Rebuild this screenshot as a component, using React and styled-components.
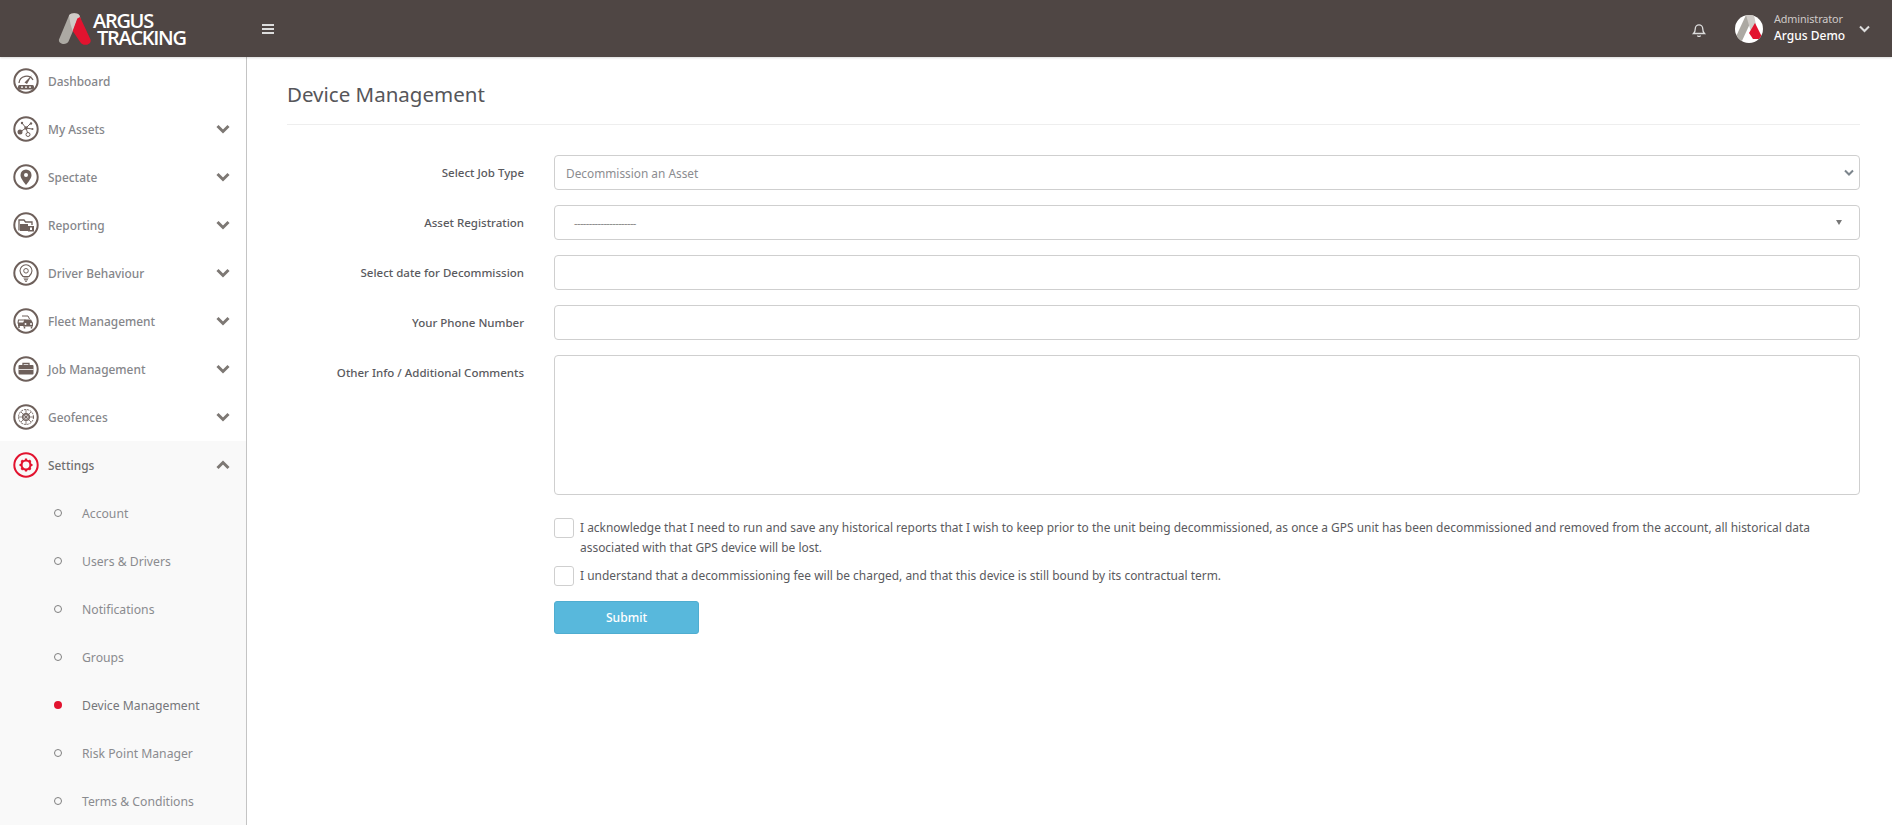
import React from "react";
import styled, { createGlobalStyle } from "styled-components";

const FONT = `"Noto Sans", "Open Sans", sans-serif`;

const Global = createGlobalStyle`
  html, body { margin: 0; padding: 0; height: 100%; background: #fff; overflow: hidden; }
  body { font-family: ${FONT}; }
  * { box-sizing: border-box; }
`;

const Page = styled.div`
  width: 1892px;
  height: 825px;
  display: flex;
  flex-direction: column;
  overflow: hidden;
`;

const Header = styled.header`
  height: 57px;
  flex: none;
  background: #4f4644;
  display: flex;
  align-items: center;
  box-shadow: 0 1px 2px rgba(0,0,0,.15);
  position: relative;
  z-index: 2;
`;
const LogoArea = styled.div`
  width: 262px;
  padding-left: 58px;
  display: flex;
  align-items: center;
  gap: 1px;
`;
const LogoMarkSvg = styled.svg`
  width: 34px;
  height: 34px;
  flex: none;
`;
const LogoText = styled.div`
  color: #fff;
  font-family: "Open Sans", sans-serif;
  font-weight: 600;
  font-size: 20px;
  line-height: 17px;
  letter-spacing: -1.3px;
  padding-left: 4px;
  text-indent: -4px;
  white-space: nowrap;
`;
const HeaderSpacer = styled.div`flex: 1;`;
const Hamburger = styled.div`
  width: 12px;
  display: flex;
  flex-direction: column;
  gap: 2px;
  span { display: block; height: 2px; background: #ddd; }
`;
const Bell = styled.svg`
  width: 16px;
  height: 16px;
  margin-right: 28px;
  fill: none;
  stroke: #ddd;
  stroke-width: 1.3;
`;
const Avatar = styled.svg`
  width: 28px;
  height: 28px;
  margin-right: 11px;
  flex: none;
`;
const UserBlock = styled.div`
  display: flex;
  flex-direction: column;
  width: 85px;
  margin-top: -2px;
`;
const Role = styled.div`
  color: #cfcac8;
  font-size: 10.8px;
  line-height: 15px;
  letter-spacing: -0.1px;
`;
const UserName = styled.div`
  color: #fff;
  font-size: 12px;
  font-weight: 500;
  line-height: 19px;
`;
const UserChevron = styled.svg`
  width: 11px;
  height: 8px;
  margin-right: 22px;
  fill: none;
  stroke: #ddd;
  stroke-width: 2;
`;

const Body = styled.div`
  flex: 1;
  min-height: 0;
  display: flex;
`;
const Sidebar = styled.nav`
  width: 247px;
  flex: none;
  border-right: 1px solid #c4c4c4;
  overflow: hidden;
`;
const MenuRow = styled.div`
  height: 48px;
  display: flex;
  align-items: center;
  padding-left: 13px;
  padding-right: 16px;
  background: ${p => (p.$open ? "#f9f9f9" : "#fff")};
  color: ${p => (p.$open ? "#6f6f6f" : "#85868a")};
  font-size: 11.9px;
  font-weight: 500;
`;
const Ring = styled.svg`
  width: 26px;
  height: 26px;
  flex: none;
  margin-right: 9px;
`;
const MenuLabel = styled.span`flex: 1;`;
const Chevron = styled.svg`
  width: 14px;
  height: 10px;
  fill: none;
  stroke: #7d7874;
  stroke-width: 3;
  transform: ${p => (p.$up ? "rotate(180deg)" : "none")};
`;
const SubList = styled.div`
  background: #f9f9f9;
`;
const SubRow = styled.div`
  height: 48px;
  display: flex;
  align-items: center;
  padding-left: 54px;
  color: ${p => (p.$active ? "#75767a" : "#8a8b8f")};
  font-size: 12.2px;
`;
const Dot = styled.span`
  width: 8px;
  height: 8px;
  border-radius: 50%;
  flex: none;
  margin-right: 20px;
  border: ${p => (p.$active ? "none" : "1px solid #808080")};
  background: ${p => (p.$active ? "#e2132f" : "transparent")};
`;

const Main = styled.main`
  flex: 1;
  min-width: 0;
  padding: 0 32px 0 40px;
`;
const Title = styled.h1`
  margin: 0;
  height: 68px;
  border-bottom: 1px solid #eeeeee;
  font-size: 20.5px;
  font-weight: 400;
  line-height: 29px;
  padding-top: 23px;
  color: #56565a;
`;
const Form = styled.form`
  margin-top: 30px;
  display: flex;
  flex-direction: column;
`;
const Row = styled.div`
  display: flex;
  margin-bottom: 15px;
`;
const Label = styled.label`
  width: 237px;
  margin-right: 30px;
  flex: none;
  text-align: right;
  font-size: 11.5px;
  font-weight: 500;
  line-height: 35px;
  color: #5a5a5e;
`;
const fieldCss = `
  flex: 1;
  min-width: 0;
  height: 35px;
  border: 1px solid #cfcfcf;
  border-radius: 4px;
  background: #fff;
  font-family: ${FONT};
  font-size: 11.85px;
  outline: none;
`;
const SelectBox = styled.div`
  ${fieldCss}
  display: flex;
  align-items: center;
  justify-content: space-between;
  padding: ${p => p.$pad || "0 5px 0 11px"};
  color: #8b8c90;
`;
const Input = styled.input`${fieldCss}`;
const Area = styled.textarea`
  ${fieldCss}
  height: 140px;
  resize: none;
`;
const SmallChevron = styled.svg`
  width: 10px;
  height: 7px;
  fill: none;
  stroke: #7c858c;
  stroke-width: 2;
`;
const Triangle = styled.span`
  width: 0;
  height: 0;
  border-left: 3.5px solid transparent;
  border-right: 3.5px solid transparent;
  border-top: 5px solid #777;
`;
const Dashes = styled.span`
  color: #888;
  letter-spacing: -0.6px;
  font-size: 11px;
`;
const CheckRow = styled.div`
  display: flex;
  margin-left: 267px;
  margin-top: ${p => p.$top || 0}px;
`;
const CheckBox = styled.input.attrs({ type: "checkbox" })`
  appearance: none;
  width: 20px;
  height: 20px;
  margin: 0 6px 0 0;
  flex: none;
  border: 1px solid #cfcfcf;
  border-radius: 3px;
  background: #fff;
`;
const CheckText = styled.div`
  font-size: 11.95px;
  line-height: 20px;
  white-space: nowrap;
  color: #5a5a5e;
`;
const Submit = styled.button`
  margin: 15px 0 0 267px;
  width: 145px;
  height: 33px;
  background: #58b8dc;
  border: 1px solid #4fadd0;
  border-radius: 3px;
  color: #fff;
  font-family: ${FONT};
  font-size: 12.1px;
  font-weight: 500;
`;

const LogoMark = () => (
  <LogoMarkSvg viewBox="0 0 34 34">
    <path d="M11 3.500C12.500 .5 20 .5 21.500 3.500L10.500 29.500C8.800 33.500 0 32.500 1 27.500Z" fill="#aca9a3" />
    <path d="M11 3.500C12.500 .5 20 .5 21.500 3.500L22.500 6.500 19.300 7 14.700 19.300 12.500 12Z" fill="#cfcbc7" />
    <path d="M19.300 6.500L22 5 32.500 27.500C34 32.500 25.500 35 22.500 30.500L14.700 19Z" fill="#e2132f" />
  </LogoMarkSvg>
);

const brown = "#6e605b";
const RingIcon = ({ color = brown, children }) => (
  <Ring viewBox="0 0 26 26">
    <circle cx="13" cy="13" r="11.7" fill="none" stroke={color} strokeWidth="2" />
    {children}
  </Ring>
);

const icons = {
  Dashboard: (
    <RingIcon>
      <path d="M6 15a7.500 7.500 0 0 1 14 -3" fill="none" stroke={brown} strokeWidth="1.300" />
      <path d="M11.500 14.500 L19 7 L14 16Z" fill={brown} />
      <rect x="5" y="17" width="16" height="4.500" rx="1.500" fill={brown} />
      <path d="M8 19.200h2M12 19.200h2M16 19.200h2" stroke="#fff" strokeWidth="1.200" />
    </RingIcon>
  ),
  Assets: (
    <RingIcon>
      <path d="M7 16 L13 12 L18 7 M13 12 L9 7 M13 12 L19 13 M13 12 L15 18" stroke={brown} strokeWidth="1" fill="none" />
      <circle cx="7" cy="16" r="2.500" fill={brown} />
      <circle cx="13" cy="12" r="1.800" fill={brown} />
      <circle cx="18" cy="7.500" r="1.200" fill={brown} />
      <circle cx="9" cy="7" r="1.200" fill={brown} />
      <circle cx="19.500" cy="13" r="1" fill={brown} />
      <circle cx="15" cy="18.500" r="2" fill="#fff" stroke={brown} strokeWidth="1" />
    </RingIcon>
  ),
  Spectate: (
    <RingIcon>
      <path d="M13 21 C9 16 7.500 13.500 7.500 11 a5.500 5.500 0 0 1 11 0 C18.500 13.500 17 16 13 21Z" fill={brown} />
      <circle cx="13" cy="11" r="2" fill="#fff" />
    </RingIcon>
  ),
  Reporting: (
    <RingIcon>
      <path d="M6 18.500V8h5l1.500 2H19v3" fill="none" stroke={brown} strokeWidth="1.300" />
      <rect x="7" y="12" width="8" height="7" fill={brown} />
      <rect x="15" y="14" width="6" height="5.500" fill={brown} />
      <rect x="17" y="15.500" width="2" height="2.500" fill="#fff" />
    </RingIcon>
  ),
  Driver: (
    <RingIcon>
      <path d="M10 16.500C8.500 15 7 13.300 7 10.800a6 6 0 0 1 12 0c0 2.500-1.500 4.200-3 5.700Z" fill="none" stroke={brown} strokeWidth="1.100" />
      <circle cx="13" cy="10.800" r="2.300" fill="none" stroke={brown} strokeWidth="1" />
      <path d="M10.500 18h5M11 19.700h4M12 21.200h2" stroke={brown} strokeWidth="1.100" />
    </RingIcon>
  ),
  Fleet: (
    <RingIcon>
      <path d="M9 8h6l1.500 3" fill="none" stroke={brown} strokeWidth="1" />
      <path d="M5.500 12h6.500l1 3H5Z" fill="none" stroke={brown} strokeWidth="1.100" />
      <path d="M10 15l1.500-3.500h6.500l2 3.500v3.500H10Z" fill={brown} />
      <path d="M5 15h6v3H5Z" fill={brown} />
      <circle cx="12.500" cy="16" r="1" fill="#fff" />
      <circle cx="18" cy="16" r="1" fill="#fff" />
      <path d="M6 18v2M11.500 18.500v2M18.500 18.500v2" stroke={brown} strokeWidth="1.500" />
    </RingIcon>
  ),
  Job: (
    <RingIcon>
      <path d="M10 9V7.500h6V9" fill="none" stroke={brown} strokeWidth="1.300" />
      <rect x="5.500" y="9" width="15" height="9.500" rx="1" fill={brown} />
      <path d="M5.500 13.500h15" stroke="#fff" strokeWidth="0.800" />
    </RingIcon>
  ),
  Geofences: (
    <RingIcon>
      <circle cx="13" cy="13" r="7.500" fill="none" stroke={brown} strokeWidth="1" strokeDasharray="2 1" />
      <path d="M13 5.500v15M5.500 13h15M7.700 7.700l10.600 10.600M18.300 7.700L7.700 18.300" stroke={brown} strokeWidth="0.800" />
      <circle cx="13" cy="13" r="3.300" fill="none" stroke={brown} strokeWidth="1.400" />
    </RingIcon>
  ),
  Settings: (
    <RingIcon color="#e2132f">
      <circle cx="13" cy="13" r="4.500" fill="none" stroke="#e2132f" strokeWidth="2.200" />
      <path d="M13 6.500v2.500M13 17v2.500M6.500 13h2.500M17 13h2.500M8.400 8.400l1.800 1.800M15.800 15.800l1.800 1.800M17.600 8.400l-1.800 1.800M10.200 15.800l-1.800 1.800" stroke="#e2132f" strokeWidth="2.200" />
    </RingIcon>
  ),
};

const menu = [
  { label: "Dashboard", icon: icons.Dashboard, noChevron: true },
  { label: "My Assets", icon: icons.Assets },
  { label: "Spectate", icon: icons.Spectate },
  { label: "Reporting", icon: icons.Reporting },
  { label: "Driver Behaviour", icon: icons.Driver },
  { label: "Fleet Management", icon: icons.Fleet },
  { label: "Job Management", icon: icons.Job },
  { label: "Geofences", icon: icons.Geofences },
];
const subs = ["Account", "Users & Drivers", "Notifications", "Groups", "Device Management", "Risk Point Manager", "Terms & Conditions"];

const ChevronIcon = ({ up }) => (
  <Chevron $up={up} viewBox="0 0 14 10"><path d="M1.500 2 L7 7.500 L12.500 2" /></Chevron>
);

export default function App() {
  return (
    <Page>
      <Global />
      <Header>
        <LogoArea>
          <LogoMark />
          <LogoText>ARGUS<br />TRACKING</LogoText>
        </LogoArea>
        <Hamburger><span /><span /><span /></Hamburger>
        <HeaderSpacer />
        <Bell viewBox="0 0 16 16">
          <path d="M2.500 12.500c1-1 1.800-2 1.800-5a3.700 3.700 0 0 1 7.400 0c0 3 .8 4 1.800 5Z" />
          <path d="M6.500 14.500a1.600 1.600 0 0 0 3 0" />
        </Bell>
        <Avatar viewBox="0 0 28 28">
          <defs><clipPath id="av"><circle cx="14" cy="14" r="14" /></clipPath></defs>
          <g clipPath="url(#av)">
            <rect width="28" height="28" fill="#fff" />
            <path d="M11 0h8L6 28H-2Z" fill="#aca9a3" />
            <path d="M11 0h8l2 10-5 7Z" fill="#cfcbc7" />
            <path d="M20 8 L28 24 L18 24 L14 18Z" fill="#e2132f" />
          </g>
        </Avatar>
        <UserBlock>
          <Role>Administrator</Role>
          <UserName>Argus Demo</UserName>
        </UserBlock>
        <UserChevron viewBox="0 0 11 8"><path d="M1 1.500 L5.500 6 L10 1.500" /></UserChevron>
      </Header>
      <Body>
        <Sidebar>
          {menu.map(m => (
            <MenuRow key={m.label}>
              {m.icon}
              <MenuLabel>{m.label}</MenuLabel>
              {!m.noChevron && <ChevronIcon />}
            </MenuRow>
          ))}
          <MenuRow $open>
            {icons.Settings}
            <MenuLabel>Settings</MenuLabel>
            <ChevronIcon up />
          </MenuRow>
          <SubList>
            {subs.map(s => (
              <SubRow key={s} $active={s === "Device Management"}>
                <Dot $active={s === "Device Management"} />
                {s}
              </SubRow>
            ))}
          </SubList>
        </Sidebar>
        <Main>
          <Title>Device Management</Title>
          <Form>
            <Row>
              <Label>Select Job Type</Label>
              <SelectBox>
                Decommission an Asset
                <SmallChevron viewBox="0 0 10 7"><path d="M1 1.500 L5 5.500 L9 1.500" /></SmallChevron>
              </SelectBox>
            </Row>
            <Row>
              <Label>Asset Registration</Label>
              <SelectBox $pad="0 17px 0 19px">
                <Dashes>---------------------</Dashes>
                <Triangle />
              </SelectBox>
            </Row>
            <Row>
              <Label>Select date for Decommission</Label>
              <Input />
            </Row>
            <Row>
              <Label>Your Phone Number</Label>
              <Input />
            </Row>
            <Row>
              <Label>Other Info / Additional Comments</Label>
              <Area />
            </Row>
            <CheckRow $top={8}>
              <CheckBox />
              <CheckText>
                I acknowledge that I need to run and save any historical reports that I wish to keep prior to the unit being decommissioned, as once a GPS unit has been decommissioned and removed from the account, all historical data<br />
                associated with that GPS device will be lost.
              </CheckText>
            </CheckRow>
            <CheckRow $top={8}>
              <CheckBox />
              <CheckText>I understand that a decommissioning fee will be charged, and that this device is still bound by its contractual term.</CheckText>
            </CheckRow>
            <Submit type="button">Submit</Submit>
          </Form>
        </Main>
      </Body>
    </Page>
  );
}
